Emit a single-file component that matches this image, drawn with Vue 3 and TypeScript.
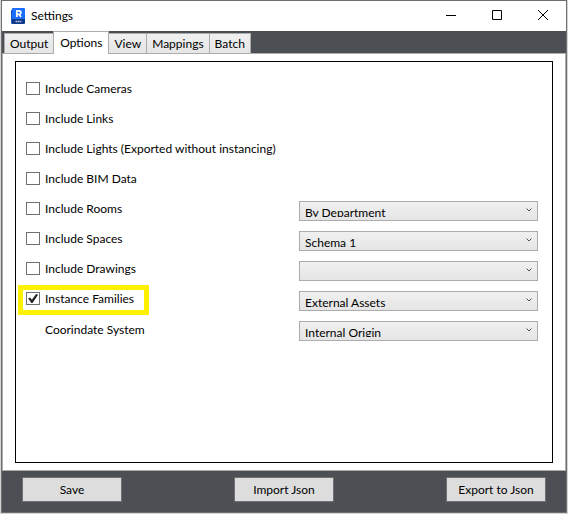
<script setup lang="ts">
import { ref, reactive } from 'vue'

interface OptionRow {
  id: string
  label: string
  checked?: boolean
  choices?: string[]
  value?: string
  highlight?: boolean
}

const tabs = ['Output', 'Options', 'View', 'Mappings', 'Batch']
const activeTab = ref('Options')

const rows = reactive<OptionRow[]>([
  { id: 'cameras', label: 'Include Cameras', checked: false },
  { id: 'links', label: 'Include Links', checked: false },
  { id: 'lights', label: 'Include Lights (Exported without instancing)', checked: false },
  { id: 'bim', label: 'Include BIM Data', checked: false },
  { id: 'rooms', label: 'Include Rooms', checked: false, choices: ['By Department'], value: 'By Department' },
  { id: 'spaces', label: 'Include Spaces', checked: false, choices: ['Schema 1'], value: 'Schema 1' },
  { id: 'drawings', label: 'Include Drawings', checked: false, choices: [''], value: '' },
  { id: 'families', label: 'Instance Families', checked: true, choices: ['External Assets'], value: 'External Assets', highlight: true },
  { id: 'coords', label: 'Coorindate System', choices: ['Internal Origin'], value: 'Internal Origin' },
])
</script>

<template>
  <div class="window">
    <header class="titlebar">
      <svg class="logo" viewBox="0 0 14 17" aria-hidden="true">
        <path d="M0 2h3v14H1.500Q0 16 0 14.500z" fill="#1457c0" />
        <path d="M2 0h11q1 0 1 1v11H1V1q0-1 1-1z" fill="#1a6dff" />
        <path d="M1 11h13v4q0 1-1 1H2q-1 0-1-1z" fill="#0b3a86" />
        <path d="M5.800 9V2.900h2.200q1.900 0 1.900 1.700T8 6.300H5.800M8 6.300L10 9" fill="none" stroke="#fff" stroke-width="1.700" />
        <path d="M4.500 13.500h6" stroke="#b8c8e6" stroke-width="1.600" stroke-dasharray="1.600 .5" />
      </svg>
      <span class="title">Settings</span>
      <div class="controls">
        <button type="button" aria-label="Minimize">
          <svg viewBox="0 0 10 10"><path d="M0 5.500h10" /></svg>
        </button>
        <button type="button" aria-label="Maximize">
          <svg viewBox="0 0 10 10"><path d="M.5.5h9v9h-9z" /></svg>
        </button>
        <button type="button" aria-label="Close">
          <svg viewBox="0 0 10 10"><path d="M0 0l10 10M10 0L0 10" /></svg>
        </button>
      </div>
    </header>

    <nav class="tabs" role="tablist">
      <button
        v-for="tab in tabs"
        :key="tab"
        type="button"
        role="tab"
        class="tab"
        :class="{ active: tab === activeTab }"
        :aria-selected="tab === activeTab"
        @click="activeTab = tab"
      >{{ tab }}</button>
    </nav>

    <main class="page">
      <div class="panel">
        <div v-for="row in rows" :key="row.id" class="row">
          <label v-if="row.checked !== undefined" class="option" :class="{ highlight: row.highlight }">
            <input v-model="row.checked" type="checkbox" />
            <span>{{ row.label }}</span>
          </label>
          <label v-else class="option plain" :for="row.id">{{ row.label }}</label>
          <div v-if="row.choices" class="combo">
            <select :id="row.id" v-model="row.value" :aria-label="row.label">
              <option v-for="choice in row.choices" :key="choice" :value="choice">{{ choice }}</option>
            </select>
            <svg viewBox="0 0 6 4" aria-hidden="true"><path d="M.5.5L3 3L5.500.5" /></svg>
          </div>
        </div>
      </div>
    </main>

    <footer class="footer">
      <button type="button">Save</button>
      <button type="button">Import Json</button>
      <button type="button">Export to Json</button>
    </footer>
  </div>
</template>

<style>
body {
  background: #d4d4d4;
}
</style>

<style scoped>
.window {
  box-sizing: border-box;
  display: flex;
  flex-direction: column;
  min-height: calc(100vh - 1px);
  margin: 0 1px;
  border: 1px solid #6e6e70;
  background: #4c4f54;
  color: #000;
  font: 12px/16px Lato, "Noto Sans", sans-serif;
}

button,
select {
  font: inherit;
  color: inherit;
}

.titlebar {
  display: flex;
  align-items: center;
  height: 30px;
  background: #fff;
}

.logo {
  width: 14px;
  height: 17px;
  margin: 0 6px 0 9px;
}

.controls {
  display: flex;
  margin-left: auto;
}

.controls button {
  display: grid;
  place-items: center;
  width: 46px;
  height: 30px;
  padding: 0 0 2px;
  border: 0;
  background: none;
}

.controls svg {
  width: 10px;
  height: 10px;
  fill: none;
  stroke: #000;
}

.tabs {
  display: flex;
  align-items: flex-end;
  height: 22px;
  padding-left: 2px;
}

.tab {
  height: 20px;
  padding: 0 5px;
  border: 1px solid #acacac;
  border-bottom: 0;
  background: linear-gradient(#f0f0f0, #e5e5e5);
}

.tab + .tab {
  margin-left: -1px;
}

.tab.active {
  z-index: 1;
  height: 23px;
  margin-bottom: -1px;
  padding: 0 6px 1px;
  background: #fff;
}

.page {
  display: flex;
  flex: 1;
  padding: 7px 12px;
  border: 1px solid #acacac;
  background: #fff;
}

.panel {
  flex: 1;
  padding: 12px 14px 12px 10px;
  border: 1px solid #000;
}

.row {
  display: grid;
  grid-template-columns: 1fr 239px;
  align-items: center;
  height: 30px;
}

.option {
  position: relative;
  display: flex;
  align-items: flex-start;
  justify-self: start;
  gap: 5px;
  white-space: nowrap;
}

.option.plain {
  padding: 2px 0 0 19px;
}

.option.highlight::after {
  content: "";
  position: absolute;
  inset: -6px -15px -8px -8px;
  border: 5px solid #fff200;
  pointer-events: none;
}

.option input {
  appearance: none;
  width: 14px;
  height: 13px;
  margin: 1px 0 0;
  border: 1px solid #707070;
  background: #fff;
}

.option input:checked::after {
  content: "";
  display: block;
  width: 12px;
  height: 11px;
  background: #212121;
  clip-path: polygon(10% 48%, 25% 40%, 41% 62%, 76% 8%, 92% 15%, 46% 92%, 36% 92%);
}

.combo {
  position: relative;
  padding-top: 4px;
}

.combo select {
  appearance: none;
  box-sizing: border-box;
  display: block;
  width: 100%;
  height: 20px;
  padding: 3px 18px 3px 5px;
  border: 1px solid #acacac;
  border-radius: 0;
  background: linear-gradient(#f0f0f0, #e5e5e5);
}

.combo svg {
  position: absolute;
  top: 11px;
  right: 6px;
  width: 6px;
  height: 4px;
  fill: none;
  stroke: #505050;
  pointer-events: none;
}

.footer {
  display: flex;
  justify-content: space-between;
  padding: 6px 20px 10px;
}

.footer button {
  width: 100px;
  height: 25px;
  padding: 0;
  border: 1px solid #707070;
  background: #ddd;
}
</style>
